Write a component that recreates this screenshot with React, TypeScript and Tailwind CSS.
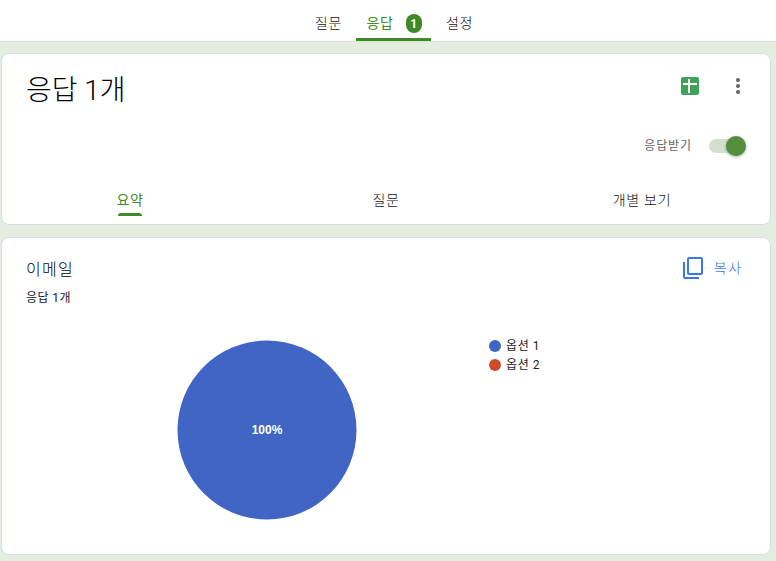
const font = { fontFamily: 'Roboto, "Noto Sans CJK KR", "Liberation Sans", sans-serif' }

function TopTabs() {
  return (
    <div className="flex h-[42px] justify-center border-b border-[#d9e0d6] bg-white pl-[13px]">
      <div className="flex h-[41px] items-start">
        <div className="px-[14px] pt-[13px] text-[14px] font-light leading-[20px] tracking-[0.7px] text-[#111]">질문</div>
        <div className="flex h-[41px] w-[75px] items-start justify-center gap-[12px] border-b-[3px] border-[#3f8a24] pl-[1px] pt-[13px] text-[14px] leading-[20px] tracking-[0.7px] text-[#3f8a24]">
          <span>응답</span>
          <span className="mt-[1px] flex h-[19px] w-[16px] items-center justify-center rounded-full bg-[#3f8a24] text-[12px] font-bold leading-none tracking-normal text-white">1</span>
        </div>
        <div className="px-[15px] pt-[13px] text-[14px] font-light leading-[20px] tracking-[0.7px] text-[#111]">설정</div>
      </div>
    </div>
  )
}

function SheetsIcon() {
  return (
    <svg width="18" height="18" viewBox="0 0 18 18">
      <rect width="18" height="18" rx="2" fill="#43a05c" />
      <rect x="2" y="6" width="14" height="2" fill="#fff" />
      <rect x="7" y="2" width="2" height="14" fill="#fff" />
    </svg>
  )
}

function MoreIcon() {
  return (
    <svg width="4" height="16" viewBox="0 0 4 16" fill="#5f6368">
      <circle cx="2" cy="2" r="2" />
      <circle cx="2" cy="8" r="2" />
      <circle cx="2" cy="14" r="2" />
    </svg>
  )
}

function CopyIcon() {
  return (
    <svg width="20" height="22" viewBox="0 0 20 22" fill="none" stroke="#3b78e7" strokeWidth="2">
      <rect x="5" y="1" width="14" height="16" rx="1" />
      <path d="M1 5v15a1 1 0 0 0 1 1h14" />
    </svg>
  )
}

function SummaryCard() {
  return (
    <section className="h-[172px] rounded-[8px] border border-[#dadce0] bg-white">
      <div className="flex items-start justify-between pl-[24px] pr-[30px] pt-[15px]">
        <h1 className="pt-[3px] text-[28px] font-light leading-[37px] text-[#000]">응답 1개</h1>
        <div className="flex items-center gap-[37px] pt-[8px]">
          <SheetsIcon />
          <MoreIcon />
        </div>
      </div>
      <div className="mt-[25px] flex h-[24px] items-center justify-end pr-[27px]">
        <span className="mr-[17px] text-[12px] leading-[18px] tracking-[0.9px] text-[#5f6368]">응답받기</span>
        <div className="relative h-[14px] w-[34px] rounded-full bg-[#d3e1cc]">
          <div className="absolute right-[-3px] top-[-3px] h-[20px] w-[20px] rounded-full bg-[#548e3c] shadow-[0_1px_3px_rgba(0,0,0,0.35)]" />
        </div>
      </div>
      <div className="mt-[11px] grid h-[47px] grid-cols-3 text-[14px] font-light leading-[20px] tracking-[0.7px]">
        <div className="flex flex-col items-center justify-between pt-[21px]">
          <span className="font-normal text-[#3f8a24]">요약</span>
          <span className="h-[3px] w-[24px] rounded-t-[3px] bg-[#3f8a24]" />
        </div>
        <div className="pt-[21px] text-center text-[#111]">질문</div>
        <div className="pt-[21px] text-center text-[#111]">개별 보기</div>
      </div>
    </section>
  )
}

function PieChart() {
  return (
    <svg width="180" height="180" viewBox="0 0 180 180">
      <circle cx="90" cy="90" r="89.5" fill="#4065c5" />
      <text x="90" y="94" textAnchor="middle" fill="#fff" fontSize="12" fontWeight="700" fontFamily="Liberation Sans">100%</text>
    </svg>
  )
}

function LegendItem({ color, label }: { color: string; label: string }) {
  return (
    <div className="flex h-[19px] items-center gap-[5px] text-[12px] tracking-[0.6px] text-[#222]">
      <span className="h-[12px] w-[12px] rounded-full" style={{ backgroundColor: color }} />
      <span>{label}</span>
    </div>
  )
}

function EmailCard() {
  return (
    <section className="mt-[12px] h-[318px] rounded-[8px] border border-[#dadce0] bg-white">
      <div className="flex items-start justify-between pl-[24px] pr-[27px] pt-[20px]">
        <div>
          <div className="text-[16px] font-light leading-[24px] tracking-[1.3px] text-[#000]">이메일</div>
          <div className="mt-[7px] text-[12px] leading-[18px] tracking-[0.4px] text-[#202124]">응답 1개</div>
        </div>
        <div className="mt-[-2px] flex items-center gap-[11px] pt-[1px] text-[#3b78e7]">
          <CopyIcon />
          <span className="text-[14px] font-light tracking-[1.8px]">복사</span>
        </div>
      </div>
      <div className="mt-[33px] flex items-start pl-[175px]">
        <PieChart />
        <div className="ml-[132px] mt-[-4px]">
          <LegendItem color="#4065c5" label="옵션 1" />
          <LegendItem color="#cf4a29" label="옵션 2" />
        </div>
      </div>
    </section>
  )
}

export default function App() {
  return (
    <div className="h-[561px] w-[776px] overflow-hidden bg-[#e3eee0]" style={font}>
      <TopTabs />
      <main className="ml-[1px] mr-[5px] mt-[11px]">
        <SummaryCard />
        <EmailCard />
      </main>
    </div>
  )
}
